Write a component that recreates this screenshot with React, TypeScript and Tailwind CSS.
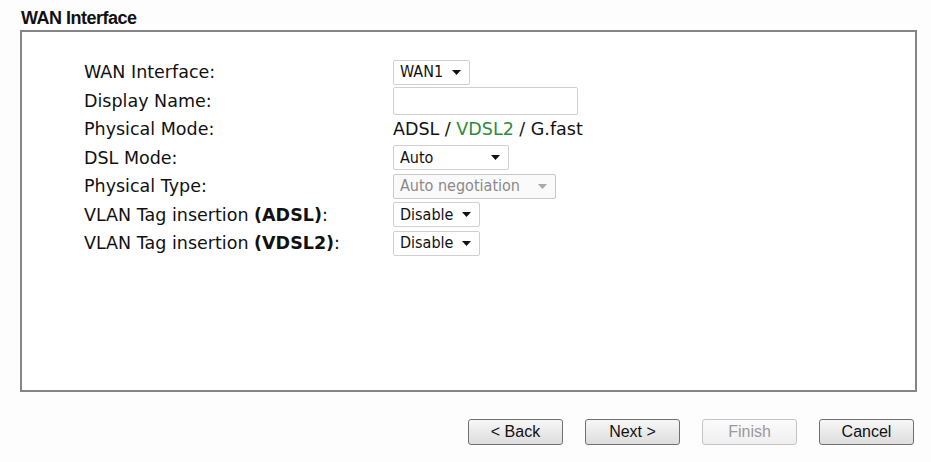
import React from 'react';

// Small dropdown lookalike (native select arrows render differently per browser)
const Select: React.FC<{ value: string; width: string; disabled?: boolean }> = ({ value, width, disabled }) => {
  return (
    <div
      className={`flex h-[25px] items-center justify-between rounded-[2px] border pl-[6px] pr-[8px] ${width} ${
        disabled ? 'border-[#c8c8c8] bg-[#fafafa] text-[#8a8a8a]' : 'border-[#d0d0d0] bg-white text-[#111]'
      }`}
    >
      <span className="font-['DejaVu_Sans_Condensed','DejaVu_Sans',sans-serif] text-[16px] leading-none">{value}</span>
      <svg width="9" height="5" viewBox="0 0 9 5" className="shrink-0">
        <path d="M0 0h9L4.5 5z" fill={disabled ? '#a8a8a8' : '#111'} />
      </svg>
    </div>
  );
};

const Button: React.FC<{ label: string; disabled?: boolean }> = ({ label, disabled }) => (
  <button
    className={`h-[26px] w-[95px] rounded-[3px] border font-['Liberation_Sans',Arial,sans-serif] text-[16px] leading-none ${
      disabled
        ? 'border-[#c4c4c4] bg-gradient-to-b from-[#fbfbfb] to-[#efefef] text-[#9a9a9a]'
        : 'border-[#707070] bg-gradient-to-b from-[#f7f7f7] to-[#dddddd] text-[#111]'
    }`}
  >
    {label}
  </button>
);

export default function App() {
  const rows: { label: React.ReactNode; control: React.ReactNode }[] = [
    { label: 'WAN Interface:', control: <Select value="WAN1" width="w-[77px]" /> },
    {
      label: 'Display Name:',
      control: <div className="h-[28px] w-[185px] rounded-[2px] border border-[#d0d0d0] bg-white" />,
    },
    {
      label: 'Physical Mode:',
      control: (
        <span>
          ADSL / <span className="text-[#2e8b3a]">VDSL2</span> / G.fast
        </span>
      ),
    },
    { label: 'DSL Mode:', control: <Select value="Auto" width="w-[116px]" /> },
    { label: 'Physical Type:', control: <Select value="Auto negotiation" width="w-[163px]" disabled /> },
    {
      label: (
        <>
          VLAN Tag insertion <b>(ADSL)</b>:
        </>
      ),
      control: <Select value="Disable" width="w-[87px]" />,
    },
    {
      label: (
        <>
          VLAN Tag insertion <b>(VDSL2)</b>:
        </>
      ),
      control: <Select value="Disable" width="w-[87px]" />,
    },
  ];

  return (
    <div className="h-[462px] w-[931px] bg-[#fdfdfd] pl-[20px] pr-[14px] pt-[6px]">
      <h1 className="h-[24px] pl-[1px] font-['Liberation_Sans',Arial,sans-serif] text-[18px] font-bold leading-[24px] tracking-[-0.5px] text-[#111]">
        WAN Interface
      </h1>
      <div className="h-[362px] border-2 border-[#858585] bg-white pl-[62px] pt-[26px]">
        <div className="font-['DejaVu_Sans',Verdana,sans-serif] text-[17.5px] text-[#111]">
          {rows.map((row, i) => (
            <div key={i} className="flex h-[28.5px] items-center">
              <div className="w-[309px] shrink-0">{row.label}</div>
              <div className="flex items-center">{row.control}</div>
            </div>
          ))}
        </div>
      </div>
      <div className="flex justify-end gap-[22px] pr-[3px] pt-[27px]">
        <Button label="< Back" />
        <Button label="Next >" />
        <Button label="Finish" disabled />
        <Button label="Cancel" />
      </div>
    </div>
  );
}
